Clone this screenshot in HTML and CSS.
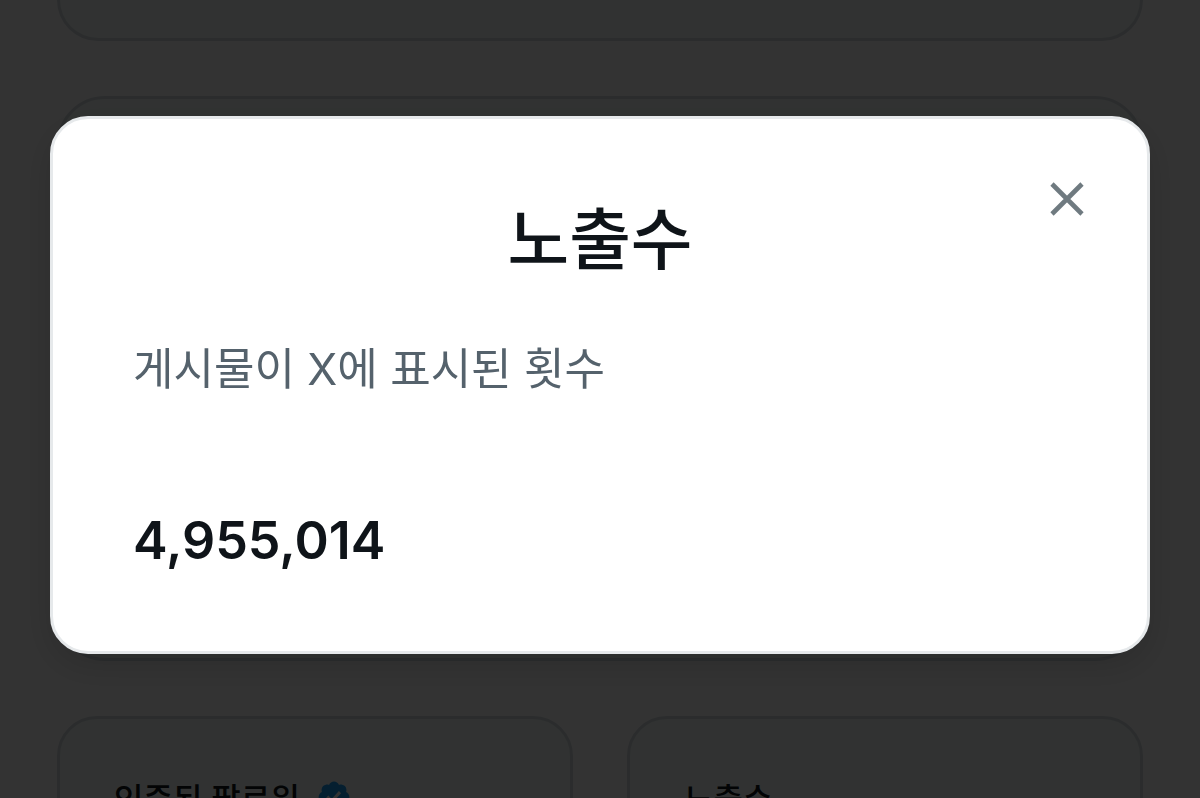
FILE: index.html
```
<!DOCTYPE html>
<html lang="ko">

<head>
  <meta charset="UTF-8">
  <meta name="viewport" content="width=device-width, initial-scale=1.0">
  <title>노출수</title>
  <link rel="stylesheet" href="styles.css">
</head>

<body>
  <main class="page">
    <section class="card card-top"></section>
    <section class="card card-chart"></section>
    <div class="stats">
      <section class="card stat">
        <h2 class="stat-title">인증된 팔로워
          <svg class="badge" viewBox="0 0 22 22" aria-hidden="true">
            <path fill="#1d9bf0" d="M20.396 11c-.018-.646-.215-1.275-.57-1.816-.354-.54-.852-.972-1.438-1.246.223-.607.27-1.264.14-1.897-.131-.634-.437-1.218-.882-1.687-.47-.445-1.053-.75-1.687-.882-.633-.13-1.29-.083-1.897.14-.273-.587-.704-1.086-1.245-1.44S11.647 1.62 11 1.604c-.646.017-1.273.213-1.813.568s-.969.854-1.24 1.44c-.608-.223-1.267-.272-1.902-.14-.635.13-1.22.436-1.69.882-.445.47-.749 1.055-.878 1.688-.13.633-.08 1.29.144 1.896-.587.274-1.087.705-1.443 1.245-.356.54-.555 1.17-.574 1.817.02.647.218 1.276.574 1.817.356.54.856.972 1.443 1.245-.224.606-.274 1.263-.144 1.896.13.634.433 1.218.877 1.688.47.443 1.054.747 1.687.878.633.132 1.29.084 1.897-.136.274.586.705 1.084 1.246 1.439.54.354 1.17.551 1.816.569.647-.016 1.276-.213 1.817-.567s.972-.854 1.245-1.44c.604.239 1.266.296 1.903.164.636-.132 1.22-.447 1.68-.907.46-.46.776-1.044.908-1.681s.075-1.299-.165-1.903c.586-.274 1.084-.705 1.439-1.246.354-.54.551-1.17.569-1.816z" />
            <path fill="#fff" d="M9.662 14.85l-3.429-3.428 1.293-1.302 2.072 2.072 4.4-4.794 1.347 1.246z" />
          </svg>
        </h2>
      </section>
      <section class="card stat">
        <h2 class="stat-title">노출수</h2>
      </section>
    </div>
  </main>

  <div class="overlay">
    <div class="dialog" role="dialog" aria-modal="true" aria-labelledby="dialog-title">
      <button class="close" type="button" aria-label="닫기">
        <svg class="close-icon" viewBox="0 0 36 36" aria-hidden="true">
          <path d="M3 3L33 33M33 3L3 33" fill="none" stroke="#6f7a80" stroke-width="4.6" />
        </svg>
      </button>
      <h1 class="title" id="dialog-title">노출수</h1>
      <p class="text">게시물이 X에 표시된 횟수</p>
      <p class="number">4,955,014</p>
    </div>
  </div>
</body>

</html>
```
FILE: styles.css
```
* {
  box-sizing: border-box;
}

body {
  margin: 0;
  height: 100vh;
  overflow: hidden;
  background-color: #ffffff;
  color: #0f1419;
  font-family: "Noto Sans CJK KR", sans-serif;
}

h1,
h2,
p {
  margin: 0;
}

.page {
  display: flex;
  flex-direction: column;
  gap: 55px;
  padding: 0 57px;
}

.card {
  background-color: #f2fbf7;
  border: 3px solid #d5dde1;
  border-radius: 48px;
}

.card-top {
  padding-top: 38px;
  border-top: none;
  border-top-left-radius: 0;
  border-top-right-radius: 0;
}

.card-chart {
  min-height: 565px;
}

.stats {
  display: grid;
  grid-template-columns: 1fr 1fr;
  gap: 54px;
}

.stat {
  padding: 54px;
  border-radius: 40px;
}

.stat-title {
  display: flex;
  align-items: center;
  gap: 16px;
  font-size: 32px;
  font-weight: 500;
  line-height: 48px;
}

.badge {
  width: 36px;
  height: 36px;
}

.overlay {
  position: fixed;
  inset: 0;
  padding: 116px 50px;
  background-color: rgba(0, 0, 0, 0.8);
}

.dialog {
  position: relative;
  padding: 72px 80px 76px;
  background-color: #ffffff;
  border: 3px solid #e6e9eb;
  border-radius: 38px;
  box-shadow: 0 12px 36px rgba(0, 0, 0, 0.15);
}

.close {
  position: absolute;
  top: 60px;
  right: 60px;
  padding: 2px;
  border: none;
  background: none;
  cursor: pointer;
}

.close-icon {
  display: block;
  width: 36px;
  height: 36px;
}

.title {
  font-size: 67px;
  font-weight: 500;
  line-height: 88px;
  text-align: center;
}

.text {
  margin-top: 60px;
  color: #55626c;
  font-family: Inter, "Noto Sans CJK KR", sans-serif;
  font-size: 44px;
  line-height: 60px;
}

.number {
  margin-top: 108px;
  font-family: Inter, "Noto Sans CJK KR", sans-serif;
  font-size: 52px;
  font-weight: 600;
  line-height: 68px;
}
```
